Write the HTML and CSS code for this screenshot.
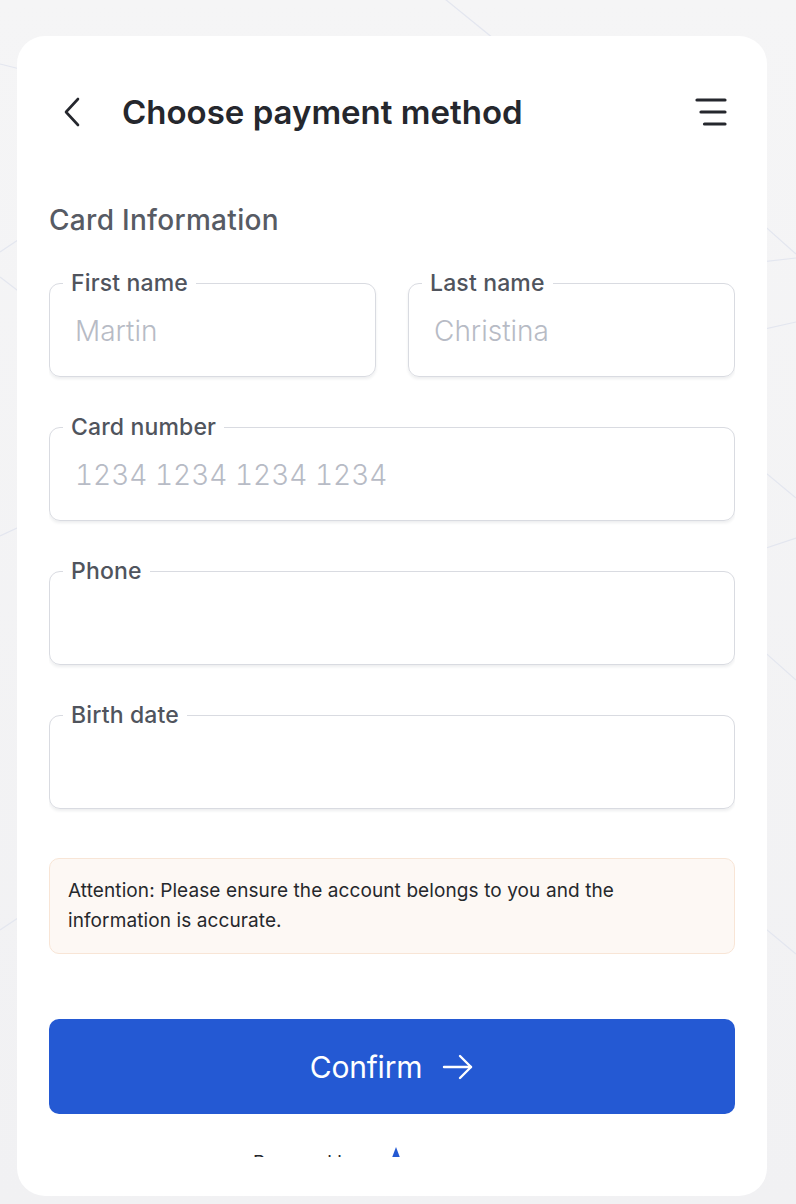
FILE: index.html
```html
<!DOCTYPE html>
<html lang="en">
<head>
<meta charset="utf-8">
<title>Choose payment method</title>
<link rel="stylesheet" href="styles.css">
</head>
<body>
<svg class="bg-lines" width="796" height="1204" viewBox="0 0 796 1204" aria-hidden="true">
  <g stroke="#e3e6ef" stroke-width="1.2" fill="none">
    <line x1="440" y1="-5" x2="520" y2="60"/>
    <line x1="0" y1="64" x2="40" y2="74"/>
    <line x1="0" y1="252" x2="30" y2="232"/>
    <line x1="0" y1="277" x2="30" y2="300"/>
    <line x1="0" y1="536" x2="30" y2="522"/>
    <line x1="0" y1="930" x2="30" y2="910"/>
    <line x1="760" y1="222" x2="796" y2="254"/>
    <line x1="760" y1="330" x2="796" y2="322"/>
    <line x1="760" y1="468" x2="796" y2="498"/>
    <line x1="760" y1="550" x2="796" y2="538"/>
    <line x1="760" y1="648" x2="796" y2="680"/>
    <line x1="760" y1="924" x2="796" y2="954"/>
    <line x1="760" y1="262" x2="796" y2="258"/>
  </g>
</svg>
<main class="card">
  <div class="viewport">
    <header class="topbar">
      <button class="icon-btn back" aria-label="Back">
        <svg width="24" height="30" viewBox="0 0 24 30"><path d="M16 2 L4 15 L16 28" fill="none" stroke="#25272d" stroke-width="2.6" stroke-linecap="round" stroke-linejoin="round"/></svg>
      </button>
      <h1 class="title">Choose payment method</h1>
      <button class="icon-btn menu" aria-label="Menu">
        <svg width="34" height="32" viewBox="0 0 34 32"><g stroke="#25272d" stroke-width="3.2" stroke-linecap="round"><line x1="3" y1="4" x2="31" y2="4"/><line x1="7" y1="16" x2="31" y2="16"/><line x1="10.5" y1="28" x2="31" y2="28"/></g></svg>
      </button>
    </header>

    <h2 class="section-title">Card Information</h2>

    <form class="form">
      <div class="row two">
        <fieldset class="field">
          <legend>First name</legend>
          <input type="text" placeholder="Martin">
        </fieldset>
        <fieldset class="field">
          <legend>Last name</legend>
          <input type="text" placeholder="Christina">
        </fieldset>
      </div>
      <fieldset class="field">
        <legend>Card number</legend>
        <input class="digits" type="text" placeholder="1234 1234 1234 1234">
      </fieldset>
      <fieldset class="field">
        <legend>Phone</legend>
        <input type="text">
      </fieldset>
      <fieldset class="field">
        <legend>Birth date</legend>
        <input type="text">
      </fieldset>
    </form>

    <div class="notice">Attention: Please ensure the account belongs to you and the information is accurate.</div>

    <button class="confirm">Confirm
      <svg width="32" height="26" viewBox="0 0 32 26"><g fill="none" stroke="#fff" stroke-width="2.4" stroke-linecap="round" stroke-linejoin="round"><line x1="2" y1="13" x2="29" y2="13"/><path d="M18 2 L29 13 L18 24"/></g></svg>
    </button>

    <footer class="powered">
      <span>Powered by</span>
      <svg class="logo" width="14" height="18" viewBox="0 0 14 18"><path d="M7 1 L13 17 L1 17 Z" fill="#2459d3"/></svg>
    </footer>
  </div>
</main>
</body>
</html>
```

FILE: styles.css
```css
* { box-sizing: border-box; }

html, body {
  margin: 0;
  padding: 0;
}

body {
  width: 796px;
  height: 1204px;
  overflow: hidden;
  background: linear-gradient(180deg, #f5f5f6 0%, #f1f1f3 100%);
  font-family: Inter, "Noto Sans", "Liberation Sans", sans-serif;
  position: relative;
}

.bg-lines {
  position: absolute;
  left: 0;
  top: 0;
}

.card {
  position: relative;
  width: 750px;
  height: 1160px;
  margin: 36px 0 0 17px;
  background: #fff;
  border-radius: 28px;
  padding: 0 32px 39px;
}

.viewport {
  height: 1121px;
  overflow: hidden;
  padding-top: 51px;
}

.topbar {
  display: flex;
  align-items: center;
  height: 50px;
}

.icon-btn {
  border: 0;
  background: none;
  padding: 0;
  display: flex;
  align-items: center;
  justify-content: center;
}

.back {
  margin-left: 13px;
  width: 24px;
}

.title {
  margin: 0 0 0 36px;
  font-size: 33px;
  line-height: 50px;
  font-weight: 600;
  color: #25272d;
  letter-spacing: 0;
  flex: 1;
}

.menu {
  margin-right: 7px;
}

.section-title {
  margin: 66px 0 0;
  font-size: 28px;
  line-height: 34px;
  font-weight: 500;
  color: #575b64;
  letter-spacing: 0.3px;
}

.form {
  margin-top: 33px;
  display: flex;
  flex-direction: column;
  gap: 37px;
}

.row.two {
  display: grid;
  grid-template-columns: 1fr 1fr;
  gap: 32px;
}

.field {
  margin: 0;
  min-width: 0;
  padding: 0 0 11px;
  border: 1.5px solid #d9dbe1;
  border-radius: 11px;
  box-shadow: 0 2px 3px rgba(30, 35, 50, 0.08);
}

.field legend {
  margin-left: 13px;
  padding: 0 8px;
  font-size: 23px;
  line-height: 26px;
  font-weight: 500;
  color: #50545d;
  letter-spacing: 0.15px;
}

.field input {
  display: block;
  width: 100%;
  height: 69px;
  border: 0;
  outline: 0;
  background: transparent;
  padding: 0 25px;
  font-family: Inter, "Noto Sans", sans-serif;
  font-size: 28px;
  font-weight: 300;
  color: #25272d;
}

.field input.digits {
  font-variant-numeric: tabular-nums;
}

.field input::placeholder {
  color: #b7bbc5;
}

.notice {
  margin-top: 49px;
  background: #fdf8f4;
  border: 1.5px solid #f8e5d6;
  border-radius: 10px;
  padding: 17px 18px 17px;
  font-size: 19px;
  line-height: 30px;
  color: #26282c;
  letter-spacing: 0.1px;
}

.confirm {
  margin-top: 65px;
  width: 100%;
  height: 95px;
  border: 0;
  border-radius: 10px;
  background: #2459d3;
  color: #fff;
  font-family: Inter, "Noto Sans", sans-serif;
  font-size: 30px;
  font-weight: 400;
  display: flex;
  align-items: center;
  justify-content: center;
  gap: 20px;
  letter-spacing: -0.2px;
}

.powered {
  margin-top: 32px;
  display: flex;
  align-items: flex-start;
  gap: 30px;
  padding-left: 204px;
  font-size: 19px;
  line-height: 24px;
  color: #25272d;
}

.powered span {
  margin-top: 5px;
}
```
